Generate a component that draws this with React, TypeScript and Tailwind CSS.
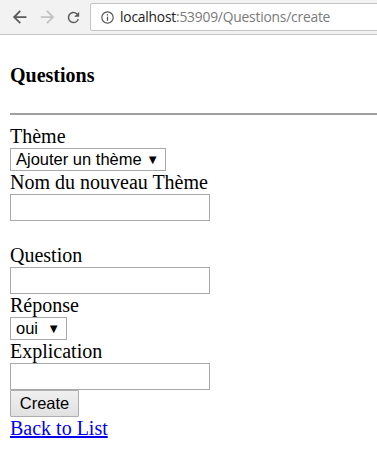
import React from "react";

const serif = "font-['Liberation_Serif',serif]";
const sans = "font-['Liberation_Sans',Arial,sans-serif]";

const Toolbar = () => (
  <div className="h-[35px] bg-[#f2f2f2] border-b border-[#c6c6c6] flex items-center overflow-hidden">
    {/* back */}
    <svg className="shrink-0 ml-[12px] w-[16px] h-[16px]" viewBox="0 0 16 16">
      <path d="M15 7H3.8l5.1-5.1L7.5.5 0 8l7.5 7.5 1.4-1.4L3.8 9H15z" fill="#5a5a5a" transform="scale(0.9) translate(1 1)" />
    </svg>
    {/* forward */}
    <svg className="shrink-0 ml-[11px] w-[16px] h-[16px]" viewBox="0 0 16 16">
      <path d="M1 7h11.2L7.1 1.9 8.5.5 16 8l-7.5 7.5-1.4-1.4L12.2 9H1z" fill="#c2c2c2" transform="scale(0.9) translate(1 1)" />
    </svg>
    {/* reload */}
    <svg className="shrink-0 ml-[10px] w-[17px] h-[17px]" viewBox="0 0 24 24">
      <path
        d="M17.65 6.35A7.958 7.958 0 0 0 12 4c-4.42 0-7.99 3.58-7.99 8s3.57 8 7.99 8c3.73 0 6.84-2.55 7.73-6h-2.08A5.99 5.99 0 0 1 12 18c-3.31 0-6-2.69-6-6s2.69-6 6-6c1.66 0 3.14.69 4.22 1.78L13 11h7V4l-2.35 2.35z"
        fill="#5a5a5a"
      />
    </svg>
    <div className="shrink-0 ml-[8px] h-[28px] w-[300px] bg-white border border-[#c4c4c4] rounded-[2px] flex items-center">
      <svg className="shrink-0 ml-[10px] w-[13px] h-[13px]" viewBox="0 0 16 16">
        <circle cx="8" cy="8" r="7" fill="none" stroke="#555" strokeWidth="1.4" />
        <rect x="7.2" y="7" width="1.6" height="5" fill="#555" />
        <rect x="7.2" y="4" width="1.6" height="1.6" fill="#555" />
      </svg>
      <span className="ml-[6px] text-[13.8px] font-['Open_Sans',sans-serif] tracking-[-0.2px] whitespace-nowrap">
        <span className="text-[#222]">localhost</span>
        <span className="text-[#7a7a7a]">:53909/Questions/create</span>
      </span>
    </div>
  </div>
);

const TextBox = () => (
  <div className="w-[200px] h-[27px] border border-[#a9a9a9] bg-white" />
);

const SelectBox = ({ text, width }: { text: string; width: string }) => (
  <div
    className={`${width} h-[23px] border border-[#a9a9a9] bg-white flex items-center justify-between pl-[5px] pr-[6px] ${sans} text-[16.5px] text-black`}
  >
    <span>{text}</span>
    <span className="text-[13px]">▼</span>
  </div>
);

export default function App() {
  return (
    <div className="min-h-[474px] bg-white">
      <Toolbar />
      <div className={`pl-[10px] ${serif} text-[20px] leading-[23px] text-black`}>
        <h4 className="pt-[29px] font-bold">Questions</h4>
        <hr className="mt-[26px] mb-[10px] border-t-2 border-[#a0a0a0]" />
        <form className="flex flex-col items-start">
          <label>Thème</label>
          <SelectBox text="Ajouter un thème" width="w-[156px]" />
          <label>Nom du nouveau Thème</label>
          <TextBox />
          <div className="h-[23px]" />
          <label>Question</label>
          <TextBox />
          <label>Réponse</label>
          <SelectBox text="oui" width="w-[57px]" />
          <label>Explication</label>
          <TextBox />
          <button
            type="button"
            className={`h-[27px] w-[69px] border border-[#adadad] rounded-[1px] bg-gradient-to-b from-[#f0f0f0] to-[#e1e1e1] ${sans} text-[16.5px] text-black`}
          >
            Create
          </button>
        </form>
        <a href="#" className="text-[#0000ee] underline">
          Back to List
        </a>
      </div>
    </div>
  );
}
